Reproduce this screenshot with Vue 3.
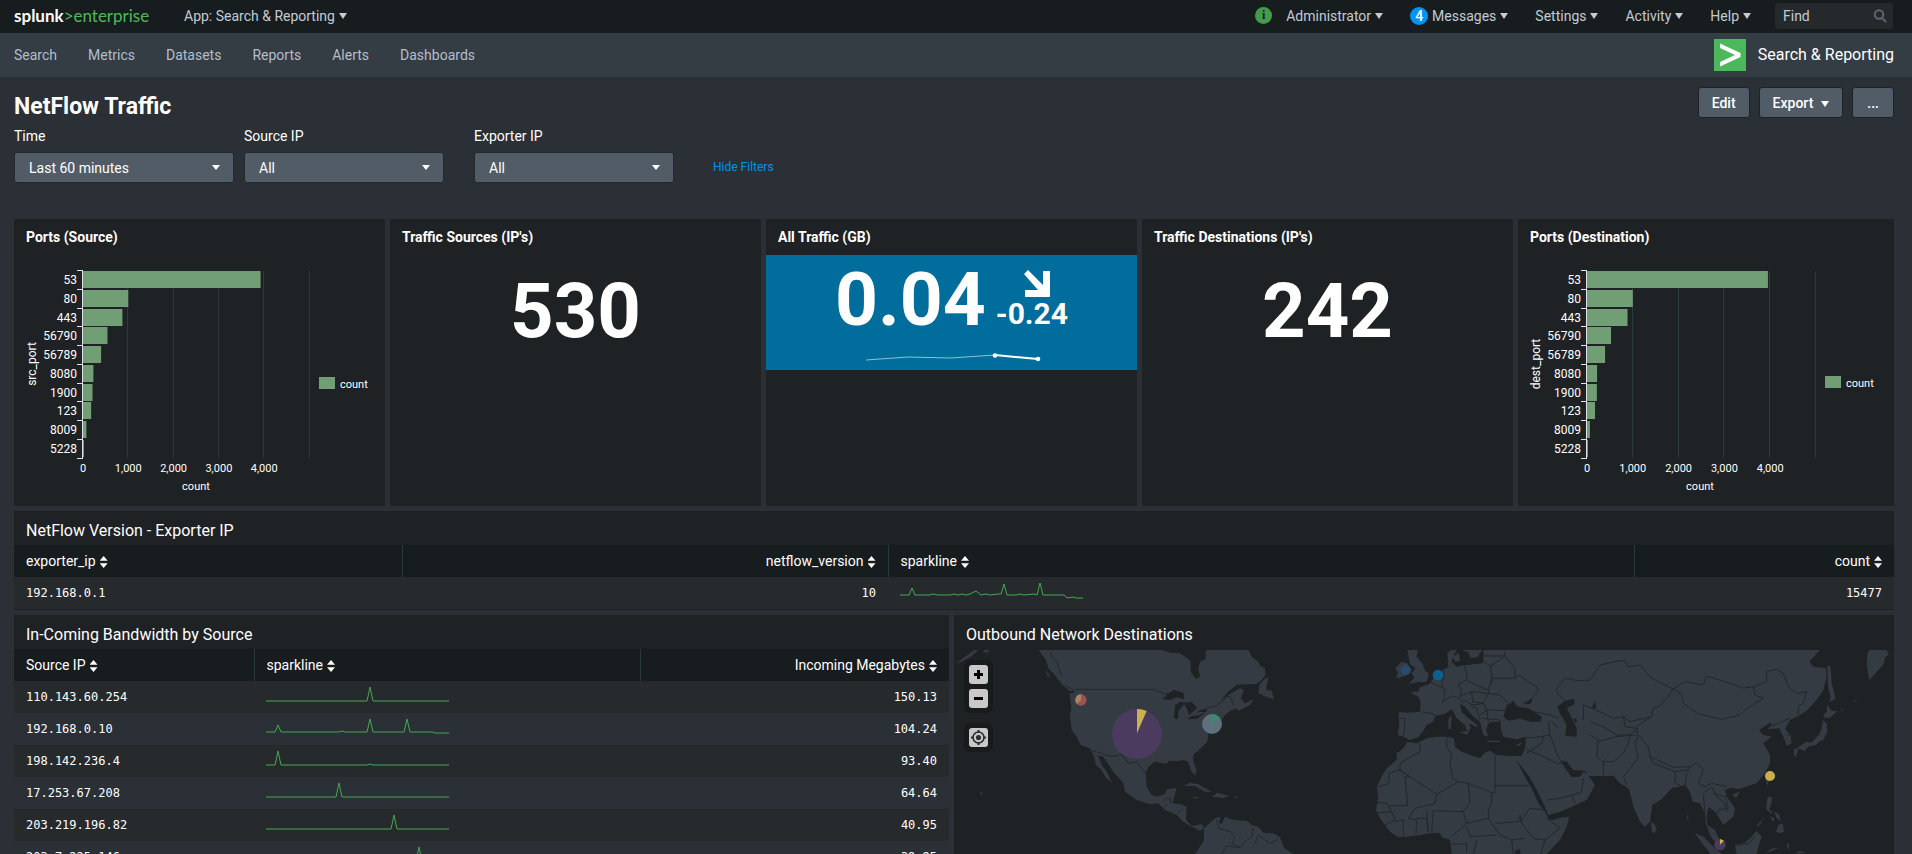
<script setup>
import { ref } from 'vue'

const navLinks = ['Search', 'Metrics', 'Datasets', 'Reports', 'Alerts', 'Dashboards']
const time = ref('Last 60 minutes')
const sourceIp = ref('All')
const exporterIp = ref('All')

const ports = ['53', '80', '443', '56790', '56789', '8080', '1900', '123', '8009', '5228']
const tickLabels = ['0', '1,000', '2,000', '3,000', '4,000']
const charts = {
  source: { width: 371, axis: 'src_port', axisX: 19, step: 45.3, legendX: 305, legendY: 122, values: [3920, 1000, 870, 540, 400, 230, 210, 180, 75, 20] },
  dest: { width: 376, axis: 'dest_port', axisX: 19, step: 45.8, legendX: 307, legendY: 121, values: [3950, 1000, 885, 525, 395, 220, 215, 175, 65, 20] },
}
const panels = [
  { title: 'Ports (Source)', chart: charts.source },
  { title: "Traffic Sources (IP's)", value: '530' },
  { title: 'All Traffic (GB)', trend: true },
  { title: "Traffic Destinations (IP's)", value: '242' },
  { title: 'Ports (Destination)', chart: charts.dest },
]
const rowY = (i) => 16 + Math.round(i * 18.75)

const bandwidth = [
  { ip: '110.143.60.254', mb: '150.13', line: '0,20 101,20 104,6 107,20 183,20' },
  { ip: '192.168.0.10', mb: '104.24', line: '0,19 9,19 12,12 15,19 73,19 76,18 79,19 101,19 104,6 107,19 138,19 141,6 144,19 167,19 168,20 183,20' },
  { ip: '198.142.236.4', mb: '93.40', line: '0,20 9,20 12,6 15,20 101,20 104,19 107,20 183,20' },
  { ip: '17.253.67.208', mb: '64.64', line: '0,20 70,20 73,6 76,20 183,20' },
  { ip: '203.219.196.82', mb: '40.95', line: '0,20 125,20 128,6 131,20 183,20' },
  { ip: '203.7.225.146', mb: '39.95', line: '0,20 150,20 153,6 156,20 183,20' },
]
</script>

<template>
  <div class="page">
    <header class="topbar">
      <a class="logo" href="#"><b>splunk</b><span>&gt;enterprise</span></a>
      <button class="menu app-menu">App: Search &amp; Reporting<i class="caret"></i></button>
      <div class="top-right">
        <button class="menu admin"><span class="info">i</span>Administrator<i class="caret"></i></button>
        <button class="menu"><span class="badge">4</span>Messages<i class="caret"></i></button>
        <button class="menu">Settings<i class="caret"></i></button>
        <button class="menu">Activity<i class="caret"></i></button>
        <button class="menu">Help<i class="caret"></i></button>
        <label class="find">
          <input type="text" placeholder="Find" aria-label="Find" />
          <svg width="14" height="14" viewBox="0 0 14 14"><circle cx="6" cy="5.5" r="4.2" /><path d="M9 9l4 4" /></svg>
        </label>
      </div>
    </header>

    <nav class="nav">
      <a v-for="l in navLinks" :key="l" href="#">{{ l }}</a>
      <a class="brand" href="#">
        <svg width="32" height="32" viewBox="0 0 32 32"><rect width="32" height="32" fill="#4cb85c" /><path d="M6 4.500L26.500 14v4L6 27.500V23L21 16 6 9z" fill="#fff" /></svg>
        Search &amp; Reporting
      </a>
    </nav>

    <main>
      <div class="head">
        <h1>NetFlow Traffic</h1>
        <div class="actions">
          <button>Edit</button>
          <button>Export<i class="caret"></i></button>
          <button class="more">...</button>
        </div>
      </div>

      <form class="filters">
        <div class="field wide">
          <label for="time">Time</label>
          <div class="select"><select id="time" v-model="time"><option>Last 60 minutes</option></select><i class="caret"></i></div>
        </div>
        <div class="field">
          <label for="src">Source IP</label>
          <div class="select"><select id="src" v-model="sourceIp"><option>All</option></select><i class="caret"></i></div>
        </div>
        <div class="field">
          <label for="exp">Exporter IP</label>
          <div class="select"><select id="exp" v-model="exporterIp"><option>All</option></select><i class="caret"></i></div>
        </div>
        <a class="hide" href="#">Hide Filters</a>
      </form>

      <section class="row five">
        <article v-for="p in panels" :key="p.title" class="panel">
          <h3>{{ p.title }}</h3>
          <svg v-if="p.chart" class="chart" :viewBox="`0 0 ${p.chart.width} 240`">
            <path v-for="n in 5" :key="n" class="grid" :d="`M${Math.round(69 + n * p.chart.step) - 0.5} 16V203`" />
            <rect v-for="(v, i) in p.chart.values" :key="i" class="bar" x="69" :y="rowY(i)" :width="Math.max(1, v * p.chart.step / 1000)" height="17" />
            <path class="axis" d="M68.500 15V204" />
            <path v-for="n in 11" :key="'t' + n" class="axis" :d="`M63 ${rowY(n - 1) - 0.5}H69`" />
            <text v-for="(t, i) in ports" :key="t" x="63" :y="rowY(i) + 13" text-anchor="end" class="port">{{ t }}</text>
            <text v-for="(t, i) in tickLabels" :key="t" :x="69 + i * p.chart.step" y="217" text-anchor="middle">{{ t }}</text>
            <text x="182" y="235" text-anchor="middle">count</text>
            <text :transform="`translate(${p.chart.axisX + 3} 109) rotate(-90)`" text-anchor="middle" class="port">{{ p.chart.axis }}</text>
            <rect class="bar" :x="p.chart.legendX" :y="p.chart.legendY" width="16" height="12" />
            <text :x="p.chart.legendX + 21" :y="p.chart.legendY + 11">count</text>
          </svg>
          <div v-if="p.value" class="big">{{ p.value }}</div>
          <div v-if="p.trend" class="trend">
            <div class="figures">
              <span class="num">0.04</span>
              <span class="delta">
                <svg width="28" height="28" viewBox="0 0 28 28"><path d="M1 4L5 0 20 15V1h7v26H2v-7h13z" fill="#fff" /></svg>
                <span>-0.24</span>
              </span>
            </div>
            <svg class="spark" width="180" height="10" viewBox="0 0 180 10">
              <path d="M4 7L46 4l43 1 44-3" fill="none" stroke="#8fc0da" />
              <path d="M133 2l43 4" fill="none" stroke="#fff" stroke-width="2" />
              <circle cx="133" cy="2.500" r="2.300" fill="#fff" /><circle cx="176" cy="6" r="2.300" fill="#fff" />
            </svg>
          </div>
        </article>
      </section>

      <section class="panel exporter">
        <h2>NetFlow Version - Exporter IP</h2>
        <table>
          <colgroup><col class="e1" /><col class="e2" /><col class="e3" /><col /></colgroup>
          <thead>
            <tr>
              <th>exporter_ip<i class="sort"></i></th>
              <th class="r">netflow_version<i class="sort"></i></th>
              <th>sparkline<i class="sort"></i></th>
              <th class="r">count<i class="sort"></i></th>
            </tr>
          </thead>
          <tbody>
            <tr>
              <td>192.168.0.1</td>
              <td class="r">10</td>
              <td><svg class="line" width="183" height="32"><polyline points="0,18 9,18 12,11 15,18 29,18 33,17 38,18 50,18 54,17 58,18 62,17 66,18 70,17 76,14 81,18 86,17 90,18 98,17 101,17 104,7 107,18 116,18 120,17 124,18 134,17 137,18 140,6 143,18 164,18 167,21 173,20 176,21 183,21" /></svg></td>
              <td class="r">15477</td>
            </tr>
          </tbody>
        </table>
      </section>

      <section class="row two">
        <article class="panel">
          <h2>In-Coming Bandwidth by Source</h2>
          <table>
            <colgroup><col class="b1" /><col class="b2" /><col /></colgroup>
            <thead>
              <tr>
                <th>Source IP<i class="sort"></i></th>
                <th>sparkline<i class="sort"></i></th>
                <th class="r">Incoming Megabytes<i class="sort"></i></th>
              </tr>
            </thead>
            <tbody>
              <tr v-for="b in bandwidth" :key="b.ip">
                <td>{{ b.ip }}</td>
                <td><svg class="line" width="183" height="32"><polyline :points="b.line" /></svg></td>
                <td class="r">{{ b.mb }}</td>
              </tr>
            </tbody>
          </table>
        </article>

        <article class="panel">
          <h2>Outbound Network Destinations</h2>
          <div class="map">
            <svg viewBox="0 0 2820 612" preserveAspectRatio="xMidYMin slice">
              <g transform="translate(-12 -30)">
                <path class="land" d="M15 72L35 58 72 30H86L62 50 40 62zM97 36l8-6h14l-7 8zM265 30H635L660 38 690 40 712 55 722 65V95L738 118 750 110 745 85 750 65 766 58 768 30H895L905 50 925 65 930 78 945 85V108L930 125 915 133 900 132 860 135 835 155 810 182 840 162 870 145 882 150 872 175 885 190 912 178 900 195 865 213 858 205 840 213 825 225 815 240V260L775 280 772 305 755 322 730 345V365L740 390 735 407 722 390 715 365 700 360 680 364 655 362 650 372 615 365 595 380 587 400 590 440 605 465 620 470 645 462 650 448 680 443 672 475 668 490 690 492 710 500 708 540 725 558 740 556 755 552 762 565 750 572 725 560 700 545 680 525 645 510 625 490 600 493 560 480 525 455 520 430 490 395 460 350 443 345 455 375 470 395 487 428 465 410 455 390 438 375 430 345 420 325 392 315 380 290 365 270 360 230 364 200 358 160 375 158 368 146 340 134 325 120 310 100 295 85 288 60zM925 160L928 135 940 120 955 112 948 150 965 152 972 178 952 172zM762 565L795 535 812 530 807 548 815 552 825 530 850 540 890 542 905 555 925 560 940 578 970 580 990 592 1003 625 1030 642H735L750 620 762 600zM700 438L720 428 745 433 785 455 765 456 735 438zM785 470L800 458 838 468 820 474zM725 470l22 2-8 4zM850 470h14v3h-14zM88 455l12 4-6 6zM286 90l18 22-12-5zM330 128l42 24-12 2z" />
                <path class="water" d="M638 178L655 160 672 150 700 158 703 178 680 172 660 180zM672 235L675 195 692 185 708 190 695 200 685 215 684 238zM700 188L725 186 742 203 728 215 718 226 710 205zM712 238L725 228 748 225 768 215 742 236zM742 215L752 209 772 208 768 216zM738 45l8-4 4 8-8 5z" />
                <path class="border" d="M375 148H610L640 160 655 162M427 333L450 338 475 348 500 348 510 342 522 350 535 370 560 365 575 385 590 402M740 218L770 205 800 197 820 182 830 168 842 172 850 197M640 485L650 475H662V490M640 505L652 492M680 520L700 505M800 540L808 565 840 575 855 590 845 610 870 622 890 600 905 590 910 565M915 612L925 585 945 600 960 610 985 598M815 642L830 618 870 622M300 35l10 20 12 10 4 22 12 18" />
              </g>
              <g transform="translate(948 -30)">
                <path class="land" d="M412 30H443L440 50 458 72 465 92 477 100 470 125 440 127 415 133 432 115 425 98 437 85 420 72zM378 112L384 98 375 85 395 65 412 70 425 90 410 105 385 115zM640 30V65L610 72 585 75 560 80 545 65 552 45 560 30H545L532 38 535 82 515 92 495 108 478 132 450 142 445 155H425L428 162 445 170 452 185 450 215 410 218 388 215 385 230 388 250 383 285 405 292 418 300 445 292 462 270 470 255 490 245 495 228 525 222 545 208 560 235 585 255 592 275 603 265 597 250 620 262 622 255 595 235 575 215 570 192 585 200 605 225 630 245 640 285 655 290 648 270 655 250 665 245 690 245 692 265 700 290 740 298 768 290 765 325 755 348 720 348 680 345 660 332 645 338 630 355 600 345 575 335 555 320 552 295 530 290 500 290 470 295 440 310 412 305 400 325 380 340V360L350 385 335 410 320 440 325 470 318 510 330 535 360 575 385 592 410 590 450 585 490 578 510 580 515 592 540 600 545 642H830L870 600 890 560 898 530 870 533 850 540 838 540 825 515 805 490 785 445 765 410 740 363 755 380 775 405 800 450 825 500 835 525 870 515 905 500 950 480 975 435 950 400 940 395 930 410 905 412 885 385 872 362 890 365 910 390 945 392 955 408 1000 408 1030 407 1050 430 1075 445 1082 465 1090 500 1110 545 1125 560 1140 545 1147 495 1175 478 1205 445 1245 435 1260 455 1268 485 1290 490 1305 520 1308 555 1325 575 1335 600 1350 605 1343 590 1335 570 1312 555 1310 530 1315 500 1335 515 1345 530 1360 555 1390 530 1395 505 1370 470 1365 450 1385 443 1405 448 1460 430 1485 400 1500 370 1500 345 1480 310 1505 290 1480 285 1467 270 1500 248 1505 252 1492 268 1528 265 1540 290 1550 318 1565 310 1562 285 1545 268 1560 240 1585 228 1610 212 1640 180 1660 150 1670 110 1668 85 1630 80 1618 65 1650 30zM535 240L545 222 543 268 535 266zM568 277L597 272 592 284zM652 302h38v4h-38zM735 315l22-8-8 10z" />
                <path class="water" d="M700 230L710 200 730 182 742 200 775 205 815 230 812 245 780 245 750 236 715 242zM758 190L788 175 782 192zM862 200L885 182 912 176 914 192 890 205 905 235 920 265V290L885 287 890 255 870 220zM910 235l12 4-6 12zM555 50l18-18 30 8 35-8v38l-50 5zM965 205l10-22 4 20zM735 632l15-5 2 15h-16z" />
                <path class="land" d="M548 50l18-12 4 24-14 4zM575 30h62l-15 22-20 2-8-18z" />
                <path class="border" d="M388 235L405 235 402 285M452 215L490 222 495 228M478 125L500 135 525 148 520 185 515 188M515 188L545 168 570 175 580 190M520 92L522 110 515 125 520 145M583 78L590 100 590 120 565 132 575 152 570 170M590 120L625 138 655 150M640 65L662 78 665 115 658 140 655 160 605 155 575 168M665 115L735 115 735 85 705 48 705 30M640 48H705M662 78L705 48M658 140L670 118M735 115L745 105 800 140 805 155 770 190M655 160L690 165 715 190 705 212 650 210 640 190 655 160M605 155L608 185 640 190M580 180L610 195 640 190M600 195L620 205 630 240M630 225L650 210M635 235L690 240M650 210L655 245M692 265L690 240M790 215L840 225 865 235M835 245L840 285 790 293 768 293M840 240L865 265M840 285L865 350 900 400M770 340L815 310 820 290M770 330L800 340 860 370 875 370M830 480L870 475 910 465 935 455 940 415M905 465L915 490M532 292L528 315 545 345 540 370 548 415 565 425M450 310V335L390 370V390L500 463 565 425 595 430 665 458H675V345M675 437H775M387 390L357 400V430L320 442M360 497H413L405 410H420L387 390M500 463L495 490 435 505 415 535M595 430L600 490 580 515 490 512 485 575M320 487L350 490 365 515 322 518M365 515L375 540 345 555M375 545L400 540 400 590M415 535L440 540 438 580M440 535H470L475 575M470 515L475 575M580 515L590 550 545 590M590 550L655 535 655 510 665 490V458M655 535L690 585 725 600 730 642M590 560L600 590 680 585M675 550L745 545 750 525 755 550 790 595 825 600M750 545L780 505 825 510M830 535L870 565 825 600 812 642M725 600L765 595M545 612H590V635M620 600L610 642M862 160L860 145 885 115 905 118 920 122 960 120 990 75 1050 62 1065 62 1075 80 1110 75 1145 115 1165 125 1210 147M862 160L885 180M940 240V195L990 215 1030 235 1060 230 1080 245 1145 230M1210 147L1190 175 1165 200 1148 205 1145 230 1100 260M960 245L1000 260 1040 285 1080 285 1105 265M960 285L985 300 980 350 1000 365 1000 408M980 305L1040 290 1100 285M1060 230L1065 260 1100 265 1105 285M1000 365L1030 365 1060 340 1075 310 1080 285M1070 435L1060 410 1105 355 1095 310 1105 285 1135 320 1140 350 1210 382 1260 380 1280 368 1300 390M1140 350L1150 370 1215 395 1255 390 1260 380M1210 147L1245 125 1300 135 1310 108 1380 130 1420 145 1450 140 1455 165 1480 175 1430 205 1410 225 1355 238 1285 222 1240 190 1235 165 1210 147M1450 140L1490 125 1490 95 1520 88 1540 100 1555 140 1580 160 1610 155 1600 190 1585 200V225M1500 260L1560 235M1300 390L1285 430 1305 440 1325 430 1370 440M1215 395V430L1230 435M1250 400L1245 440M1300 460L1325 440 1340 470 1365 490 1370 515M1305 520L1300 465M1330 460L1365 470 1375 505 1345 510 1340 525M1550 285h18" />
              </g>
              <g transform="translate(1908 -30)">
                <path class="land" d="M705 235L700 225 710 215 712 195 725 212 742 214 722 232zM698 240L710 250 712 275 700 300 685 306 680 315 660 318 640 330 618 325 650 305 665 308 690 280 695 265zM612 325L625 328 618 350 612 345zM632 328l18-4-6 10zM712 75L722 80 725 130 737 175 718 188 722 170 714 140zM830 70L833 40 838 30H890L896 45 885 52 882 72 865 90 838 120 834 100zM840 122l4-4-8 12zM750 212l12-8-6 8zM790 185l12-10-7 10zM526 418h12l-6 20zM530 490L533 470H545V490L537 508 550 520 542 520 528 508zM552 515l15 8 5 20-12-10zM540 530l14 4-4 12zM558 575L565 555 578 550 582 575 570 580zM500 555l25-22-20 26zM435 615L465 608 485 590 500 572 515 590 508 610 500 642H440zM315 580L340 590 365 615 395 642H362L340 615zM350 555L365 575 378 580 390 600 402 620 388 618 368 598 356 575zM183 545L195 555 201 570 193 580 185 575zM430 462L448 455 442 470 432 472zM525 640l22-15h18l-20 8zM590 615l6-8 2 24zM612 640l18-7 20 6zM292 520l4 22-5-8z" />
                <path class="border" d="M440 615L475 612 495 590M610 318l20-8" />
              </g>
              <circle cx="381" cy="150" r="17" fill="#9d5151" /><path d="M381 150L369 162A17 17 0 0 1 381 133z" fill="#a98566" />
              <circle cx="549" cy="252" r="75" fill="#4b3b5f" /><path d="M549 250V177Q566 177 578 183z" fill="#cbb04f" />
              <circle cx="774" cy="222" r="30" fill="#5d707c" /><path d="M774 222V192A30 30 0 0 1 798 205z" fill="#3d8a70" />
              <circle cx="1355" cy="61" r="15" fill="#274a70" /><circle cx="1452" cy="75" r="16" fill="#0b608c" />
              <circle cx="2448" cy="378" r="15" fill="#c9ae4b" /><circle cx="2298" cy="584" r="17" fill="#4b3b5f" /><path d="M2298 584V567L2310 572z" fill="#cbb04f" />
            </svg>
            <div class="controls">
              <div><button aria-label="Zoom in"><svg width="19" height="19"><path d="M9.500 5v9M5 9.500h9" stroke="#000" stroke-width="3" /></svg></button>
              <button aria-label="Zoom out"><svg width="19" height="19"><path d="M5 9.500h9" stroke="#000" stroke-width="3" /></svg></button></div>
              <div><button aria-label="Reset view"><svg width="19" height="19" fill="none" stroke="#2b2e30" stroke-width="1.500"><circle cx="9.500" cy="9.500" r="5.500" /><path d="M9.500 2v3M9.500 14v3M2 9.500h3M14 9.500h3" stroke-width="2" /><circle cx="9.500" cy="9.500" r="1.800" fill="#2b2e30" /></svg></button></div>
            </div>
          </div>
        </article>
      </section>
    </main>
  </div>
</template>

<style>
body { margin: 0; background: #2b2f36; }
</style>

<style scoped>
* { box-sizing: border-box; }
.page { height: 100vh; overflow: hidden; display: flex; flex-direction: column; background: #2b2f36; color: #fff; font: 400 14px/20px Roboto, "Liberation Sans", sans-serif; }
a { color: inherit; text-decoration: none; }
button, input, select { font: inherit; color: inherit; margin: 0; border: 0; background: none; padding: 0; }
h1, h2, h3 { margin: 0; }
.caret { display: inline-block; border: 4px solid transparent; border-top: 6px solid currentColor; border-bottom: 0; margin-left: 4px; vertical-align: 1px; }
.topbar { flex: none; height: 33px; display: flex; align-items: center; padding: 0 19px 2px 14px; background: #171c1e; color: #c3cbd4; }
.logo { width: 170px; font: 400 17px/24px Lato, sans-serif; color: #4fb85a; }
.logo b { color: #fff; font-weight: 700; }
.top-right { margin-left: auto; display: flex; align-items: center; gap: 27px; }
.menu { display: flex; align-items: center; white-space: nowrap; }
.info { width: 17px; height: 17px; margin-right: 14px; border-radius: 50%; background: #459a4c; color: #171c1e; font: 700 12px/17px "Liberation Serif", serif; }
.badge { width: 18px; height: 18px; margin-right: 4px; border-radius: 50%; background: #0094f7; color: #fff; font-weight: 500; line-height: 18px; }
.find { display: flex; align-items: center; width: 118px; height: 26px; margin-left: -3px; padding: 0 6px 0 8px; background: #26292c; border-radius: 3px; }
.find input { width: 90px; outline: 0; }
.find input::placeholder { color: #c3cbd4; opacity: 1; }
.find svg { fill: none; stroke: #5c6773; stroke-width: 2; }
.nav { flex: none; display: flex; align-items: center; gap: 31px; height: 44px; padding: 0 18px 0 14px; background: #343c44; color: #b4bec9; }
.brand { margin-left: auto; display: flex; align-items: center; gap: 12px; color: #fff; font-size: 16px; }
main { flex: 1; min-height: 0; display: flex; flex-direction: column; padding: 10px 18px 0 14px; }
.head { display: flex; justify-content: space-between; height: 39px; }
h1 { padding-top: 5px; font: 700 23px/30px Roboto, sans-serif; }
.actions { display: flex; gap: 9px; }
.actions button { height: 31px; padding: 0 13px; background: #525c66; border: 1px solid #1d2226; border-radius: 3px; font-weight: 500; }
.actions .more { padding: 0 14px; }
.actions .caret { margin-left: 8px; }
.filters { display: flex; height: 84px; margin-bottom: 9px; }
.field { width: 200px; margin-right: 30px; }
.field.wide { width: 220px; margin-right: 10px; }
.field label { display: block; height: 26px; }
.select { position: relative; }
.select select { appearance: none; display: block; width: 100%; height: 31px; padding: 0 14px; background: #525c66; border: 1px solid #24292e; border-radius: 3px; }
.select .caret { position: absolute; right: 14px; top: 13px; border-width: 5px 4px 0; }
.hide { margin: 31px 0 0 9px; color: #0094e8; font-size: 12px; }
.row { display: grid; }
.five { flex: none; grid-template-columns: repeat(5, 1fr); height: 287px; margin-bottom: 5px; }
.five .panel { margin-right: 5px; }
.five .panel:last-child { margin-right: 0; }
.panel { min-width: 0; background: #1f2224; }
h3 { height: 36px; padding: 9px 12px; font: 700 14px/19px Roboto, sans-serif; }
.chart { display: block; width: 100%; height: auto; }
.chart text { fill: #fff; font: 400 11px Roboto, sans-serif; }
.chart .port { font-size: 12px; }
.grid { stroke: #2e3a3d; }
.bar { fill: #719e75; }
.axis { stroke: #dfe3e8; }
.big { padding-top: 20px; text-align: center; font: 700 76px/72px Roboto, sans-serif; }
.trend { height: 115px; background: #006d9c; padding-top: 8px; }
.figures { display: flex; justify-content: center; gap: 10px; height: 72px; }
.num { font: 700 75px/72px Roboto, sans-serif; }
.delta { display: flex; flex-direction: column; align-items: center; padding-top: 7px; font: 700 30px/32px Roboto, sans-serif; }
.delta svg { margin-left: 10px; }
.spark { display: block; margin: 18px auto 0; }
h2 { height: 34px; padding: 8px 12px 0; font: 400 16px/23px Roboto, sans-serif; }
.exporter { flex: none; height: 99px; margin-bottom: 5px; }
table { width: 100%; table-layout: fixed; border-collapse: collapse; }
th, td { height: 32px; padding: 0 12px; text-align: left; }
th { background: #171c1e; font-weight: 400; border-right: 1px solid #2a373b; }
th:last-child { border-right: 0; }
td { font: 400 12px/20px "DejaVu Sans Mono", monospace; background: #272a2c; }
tbody tr:nth-child(even) td { background: #2b2f36; }
.r { text-align: right; }
.e1 { width: 388px; } .e2 { width: 486px; } .e3 { width: 746px; }
.b1 { width: 240px; } .b2 { width: 386px; }
.sort { display: inline-block; width: 8px; height: 12px; margin-left: 4px; vertical-align: -2px; background: currentColor; clip-path: polygon(50% 0, 100% 40%, 0 40%, 0 60%, 100% 60%, 50% 100%, 0 60%, 0 40%); }
.line { display: block; }
.line polyline { fill: none; stroke: #45a853; stroke-width: 1; }
.two { flex: 1; min-height: 0; grid-template-columns: minmax(0, 935fr) minmax(0, 940fr); gap: 5px; overflow: hidden; }
.two .panel { overflow: hidden; }
.map { position: relative; height: 400px; margin-top: 1px; }
.map > svg { display: block; width: 100%; height: auto; }
.land { fill: #343b43; }
.water { fill: #1f2224; }
.border { fill: none; stroke: #23272b; stroke-width: 3; stroke-linejoin: round; }
.controls { position: absolute; left: 10px; top: 10px; }
.controls div { display: grid; gap: 5px; padding: 5px; margin-bottom: 10px; border-radius: 6px; background: #171b1c; }
.controls button { display: block; width: 19px; height: 19px; border-radius: 3px; background: #c8c8c8; }
.controls svg { display: block; }
</style>
